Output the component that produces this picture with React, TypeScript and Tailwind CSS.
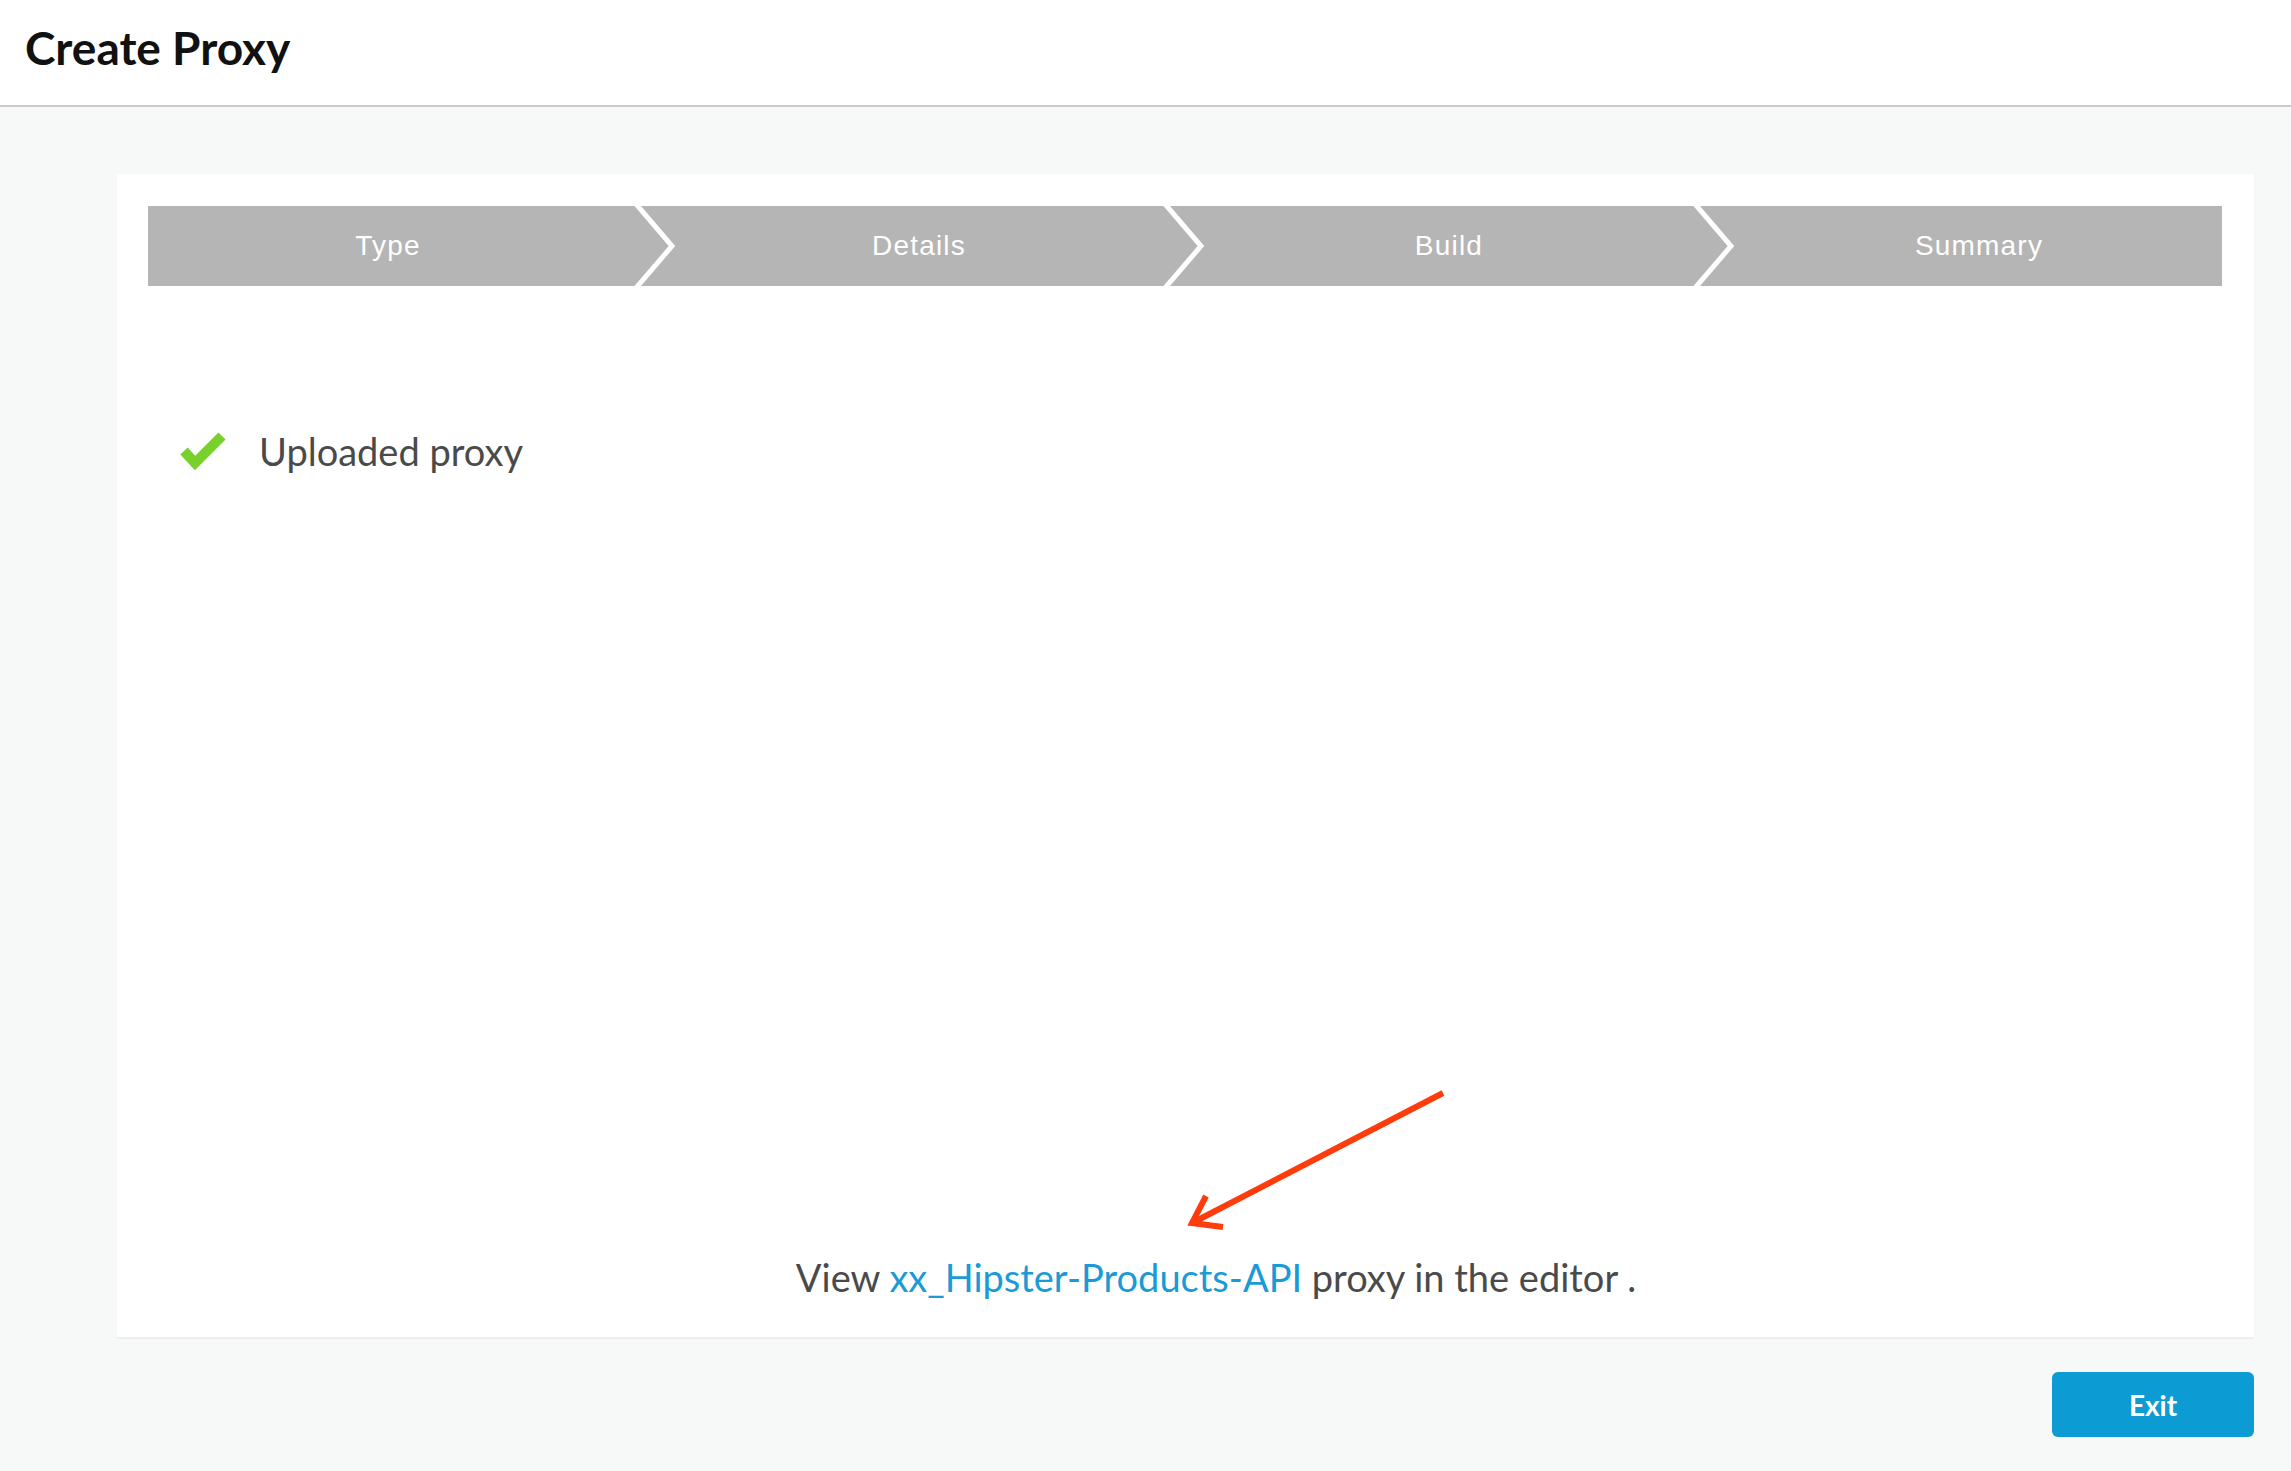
import React from "react";

function Chevron({ className }: { className: string }) {
  return (
    <svg className={className} width="50" height="80" viewBox="0 0 50 80">
      <polyline points="4,-2 40,40 4,82" fill="none" stroke="#ffffff" strokeWidth="5" strokeLinejoin="miter" />
    </svg>
  );
}

export default function App() {
  return (
    <div className="min-h-[1471px] w-full bg-[#f7f8f8] font-['Lato','Noto_Sans',sans-serif]">
      <header className="flex h-[107px] items-center border-b-2 border-[#cccccc] bg-white px-[25px] pb-[10px]">
        <h1 className="text-[46px] font-bold leading-none text-[#111111]">Create Proxy</h1>
      </header>

      <main className="pl-[117px] pr-[37px] pt-[67px] pb-[34px]">
        <section className="relative flex h-[1165px] flex-col border-b-2 border-[#ededed] bg-white pl-[31px] pr-[32px] pt-[32px]">
          <div className="flex h-[80px] bg-[#b5b5b5] font-['Liberation_Sans','Arial',sans-serif] text-[28px] tracking-[1.2px] text-white">
            <div className="relative flex w-[506px] items-center justify-center pr-[26px]">
              <span>Type</span>
              <Chevron className="absolute right-[-28px] top-0 z-10" />
            </div>
            <div className="relative flex w-[530px] items-center justify-center">
              <span>Details</span>
              <Chevron className="absolute right-[-27px] top-0 z-10" />
            </div>
            <div className="relative flex w-[530px] items-center justify-center">
              <span>Build</span>
              <Chevron className="absolute right-[-27px] top-0 z-10" />
            </div>
            <div className="flex flex-1 items-center justify-center pl-[22px]">
              <span>Summary</span>
            </div>
          </div>

          <div className="mt-[145px] flex items-center pl-[32px]">
            <svg width="47" height="39" viewBox="0 0 47 39">
              <polyline points="4,20 15,32 42,5" fill="none" stroke="#78d12b" strokeWidth="10" strokeLinejoin="miter" />
            </svg>
            <span className="ml-[32px] text-[38px] leading-none text-[#4a4a4a]">Uploaded proxy</span>
          </div>

          <div className="flex-1" />

          <p className="pb-[41px] pl-[62px] text-center text-[38px] leading-none text-[#4a4a4a]">
            View <a className="text-[#1a9bd7]">xx_Hipster-Products-API</a> proxy in the editor .
          </p>

          <svg className="absolute left-[1063px] top-[906px]" width="280" height="160" viewBox="0 0 280 160">
            <line x1="263" y1="13" x2="14" y2="142" stroke="#ff3c0c" strokeWidth="6" />
            <polyline points="26,116 12,143 43,147" fill="none" stroke="#ff3c0c" strokeWidth="6" strokeLinejoin="miter" />
          </svg>
        </section>

        <div className="mt-[33px] flex justify-end">
          <button className="flex h-[65px] w-[202px] items-center justify-center rounded-[6px] bg-[#0c9bd3] text-[28px] font-bold text-white">
            Exit
          </button>
        </div>
      </main>
    </div>
  );
}
